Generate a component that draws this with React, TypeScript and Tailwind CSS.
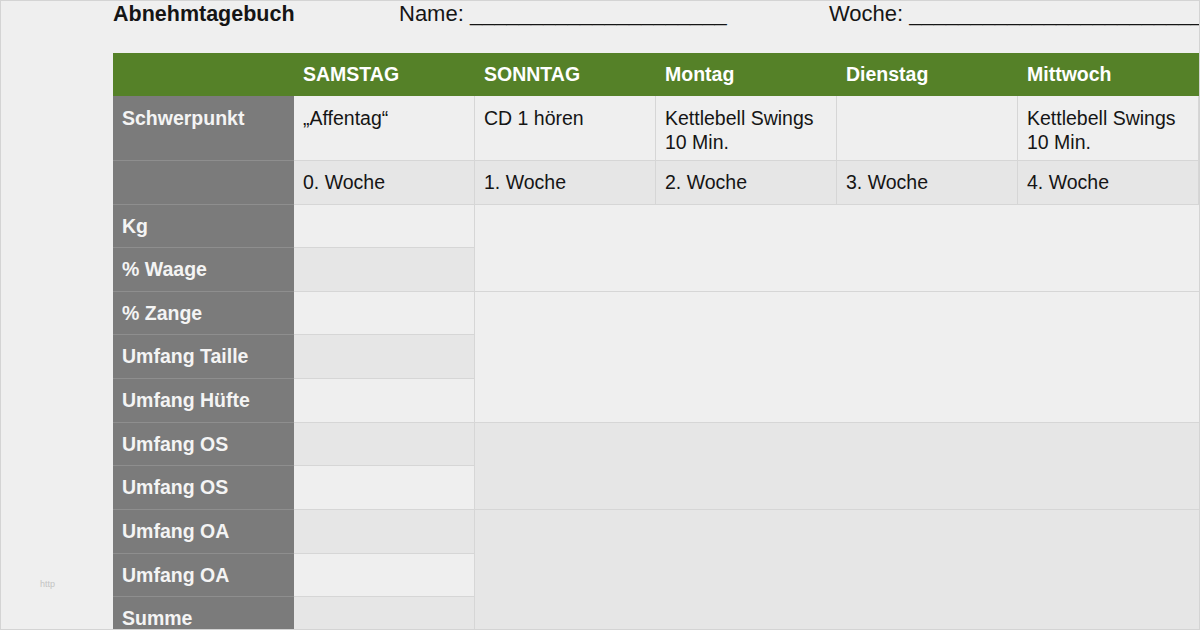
import React from "react";

const days = ["SAMSTAG", "SONNTAG", "Montag", "Dienstag", "Mittwoch"];
const focus = ["„Affentag“", "CD 1 hören", "Kettlebell Swings\n10 Min.", "", "Kettlebell Swings\n10 Min."];
const weeks = ["0. Woche", "1. Woche", "2. Woche", "3. Woche", "4. Woche"];

// label, samstag cell shade, merged block (start + span) for the remaining columns
const rows: { label: string; dark: boolean; merge?: { span: number; dark: boolean } }[] = [
  { label: "Kg", dark: false, merge: { span: 2, dark: false } },
  { label: "% Waage", dark: true },
  { label: "% Zange", dark: false, merge: { span: 3, dark: false } },
  { label: "Umfang Taille", dark: true },
  { label: "Umfang Hüfte", dark: false },
  { label: "Umfang OS", dark: true, merge: { span: 2, dark: true } },
  { label: "Umfang OS", dark: false },
  { label: "Umfang OA", dark: true, merge: { span: 4, dark: true } },
  { label: "Umfang OA", dark: false },
  { label: "Summe", dark: true },
];

const font = { fontFamily: '"Liberation Sans", Arial, sans-serif' };

export default function App() {
  return (
    <div
      className="relative w-[1200px] h-[630px] overflow-hidden border border-[#d4d4d4] bg-[#efefef] text-[#151515]"
      style={font}
    >
      {/* Kopfzeile */}
      <div className="h-[52px] pl-[112px] flex items-start text-[22px] leading-[26px] whitespace-nowrap">
        <div className="w-[286px] shrink-0 font-bold text-[21.5px]">Abnehmtagebuch</div>
        <div className="w-[430px] shrink-0">Name: _____________________</div>
        <div className="shrink-0">Woche: ________________________</div>
      </div>

      {/* Tabelle */}
      <div className="ml-[112px] grid grid-cols-[repeat(6,181px)] grid-rows-[43px_65px_44px_43px_44px_43px_44px_44px_43px_44px_44px_43px_44px] text-[19.5px] leading-[24px]">
        {/* Tage */}
        <div className="bg-[#558128]" />
        {days.map((d) => (
          <div key={d} className="bg-[#558128] px-[9px] pt-[9px] font-bold text-white">
            {d}
          </div>
        ))}

        {/* Schwerpunkt */}
        <div className="bg-[#7b7b7b] border-b border-[#8e8e8e] px-[9px] pt-[10px] font-bold text-[#f4f4f4]">
          Schwerpunkt
        </div>
        {focus.map((f, i) => (
          <div
            key={i}
            className="bg-[#efefef] border-r border-b border-[#d6d6d6] px-[9px] pt-[10px] whitespace-pre-line"
          >
            {f}
          </div>
        ))}

        {/* Wochen */}
        <div className="bg-[#7b7b7b] border-b border-[#8e8e8e]" />
        {weeks.map((w) => (
          <div key={w} className="bg-[#e6e6e6] border-r border-b border-[#d6d6d6] px-[9px] pt-[9px]">
            {w}
          </div>
        ))}

        {/* Messwerte */}
        {rows.map((r, i) => (
          <React.Fragment key={i}>
            <div className="bg-[#7b7b7b] border-b border-[#8e8e8e] px-[9px] pt-[9px] font-bold text-[#f4f4f4] whitespace-nowrap">
              {r.label}
            </div>
            <div
              className={`${r.dark ? "bg-[#e6e6e6]" : "bg-[#efefef]"} border-r border-b border-[#d6d6d6]`}
            />
            {r.merge && (
              <div
                className={`col-span-4 ${
                  r.merge.span === 2 ? "row-span-2" : r.merge.span === 3 ? "row-span-3" : "row-span-4"
                } ${r.merge.dark ? "bg-[#e6e6e6]" : "bg-[#efefef]"} border-b border-[#d6d6d6]`}
              />
            )}
          </React.Fragment>
        ))}
      </div>

      {/* Wasserzeichen */}
      <div className="absolute left-[39px] top-[578px] text-[9px] leading-[10px] text-[#c4c4c4]">http</div>
    </div>
  );
}
